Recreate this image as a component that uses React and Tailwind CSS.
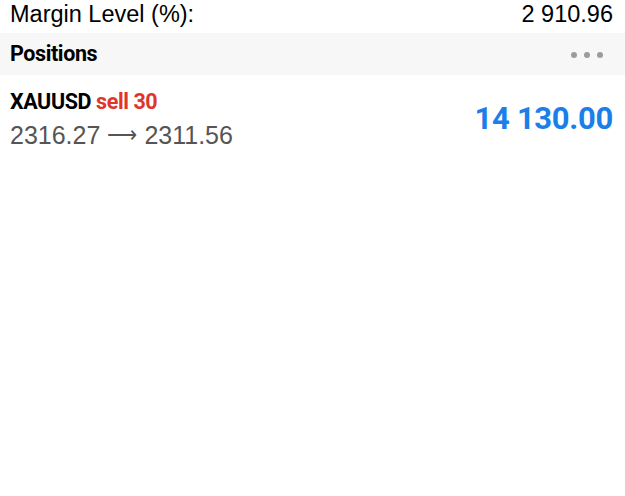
export default function App() {
  const narrow = { fontFamily: 'Roboto, "Liberation Sans", sans-serif' };

  return (
    <div className="w-[625px] h-[496px] bg-white overflow-hidden font-['Liberation_Sans',Arial,sans-serif]">
      {/* summary row, cut off at top */}
      <div className="flex justify-between items-end h-[33px] pl-[10px] pr-[12px] pb-[10px] text-[23.5px] leading-none text-black">
        <span className="leading-[18px]">Margin Level (%):</span>
        <span className="leading-[18px]">2 910.96</span>
      </div>

      {/* section header */}
      <div className="flex justify-between items-center h-[42px] bg-[#f7f7f7] pl-[10px] pr-[22px]">
        <span className="text-[21.5px] font-bold text-black tracking-[-0.4px]" style={narrow}>Positions</span>
        <div className="flex gap-[7px] mt-[1px]">
          <span className="w-[6px] h-[6px] rounded-full bg-[#9c9c9c]" />
          <span className="w-[6px] h-[6px] rounded-full bg-[#9c9c9c]" />
          <span className="w-[6px] h-[6px] rounded-full bg-[#9c9c9c]" />
        </div>
      </div>

      {/* position row */}
      <div className="flex justify-between items-center pl-[10px] pr-[12px] pt-[14px]">
        <div className="flex flex-col">
          <div className="text-[21.5px] font-bold leading-[26px] tracking-[-0.4px]" style={narrow}>
            <span className="text-black">XAUUSD</span>{' '}
            <span className="text-[#e0352b]">sell 30</span>
          </div>
          <div className="text-[25px] leading-[34px] mt-[3px] text-[#555555] flex items-center">
            <span>2316.27</span>
            <span className="mx-[7px] font-['DejaVu_Sans'] text-[21px] font-light">⟶</span>
            <span>2311.56</span>
          </div>
        </div>
        <div className="text-[31px] font-bold text-[#1a7fe8] leading-none mb-[4px] tracking-[-0.3px]" style={narrow}>14 130.00</div>
      </div>
    </div>
  );
}
